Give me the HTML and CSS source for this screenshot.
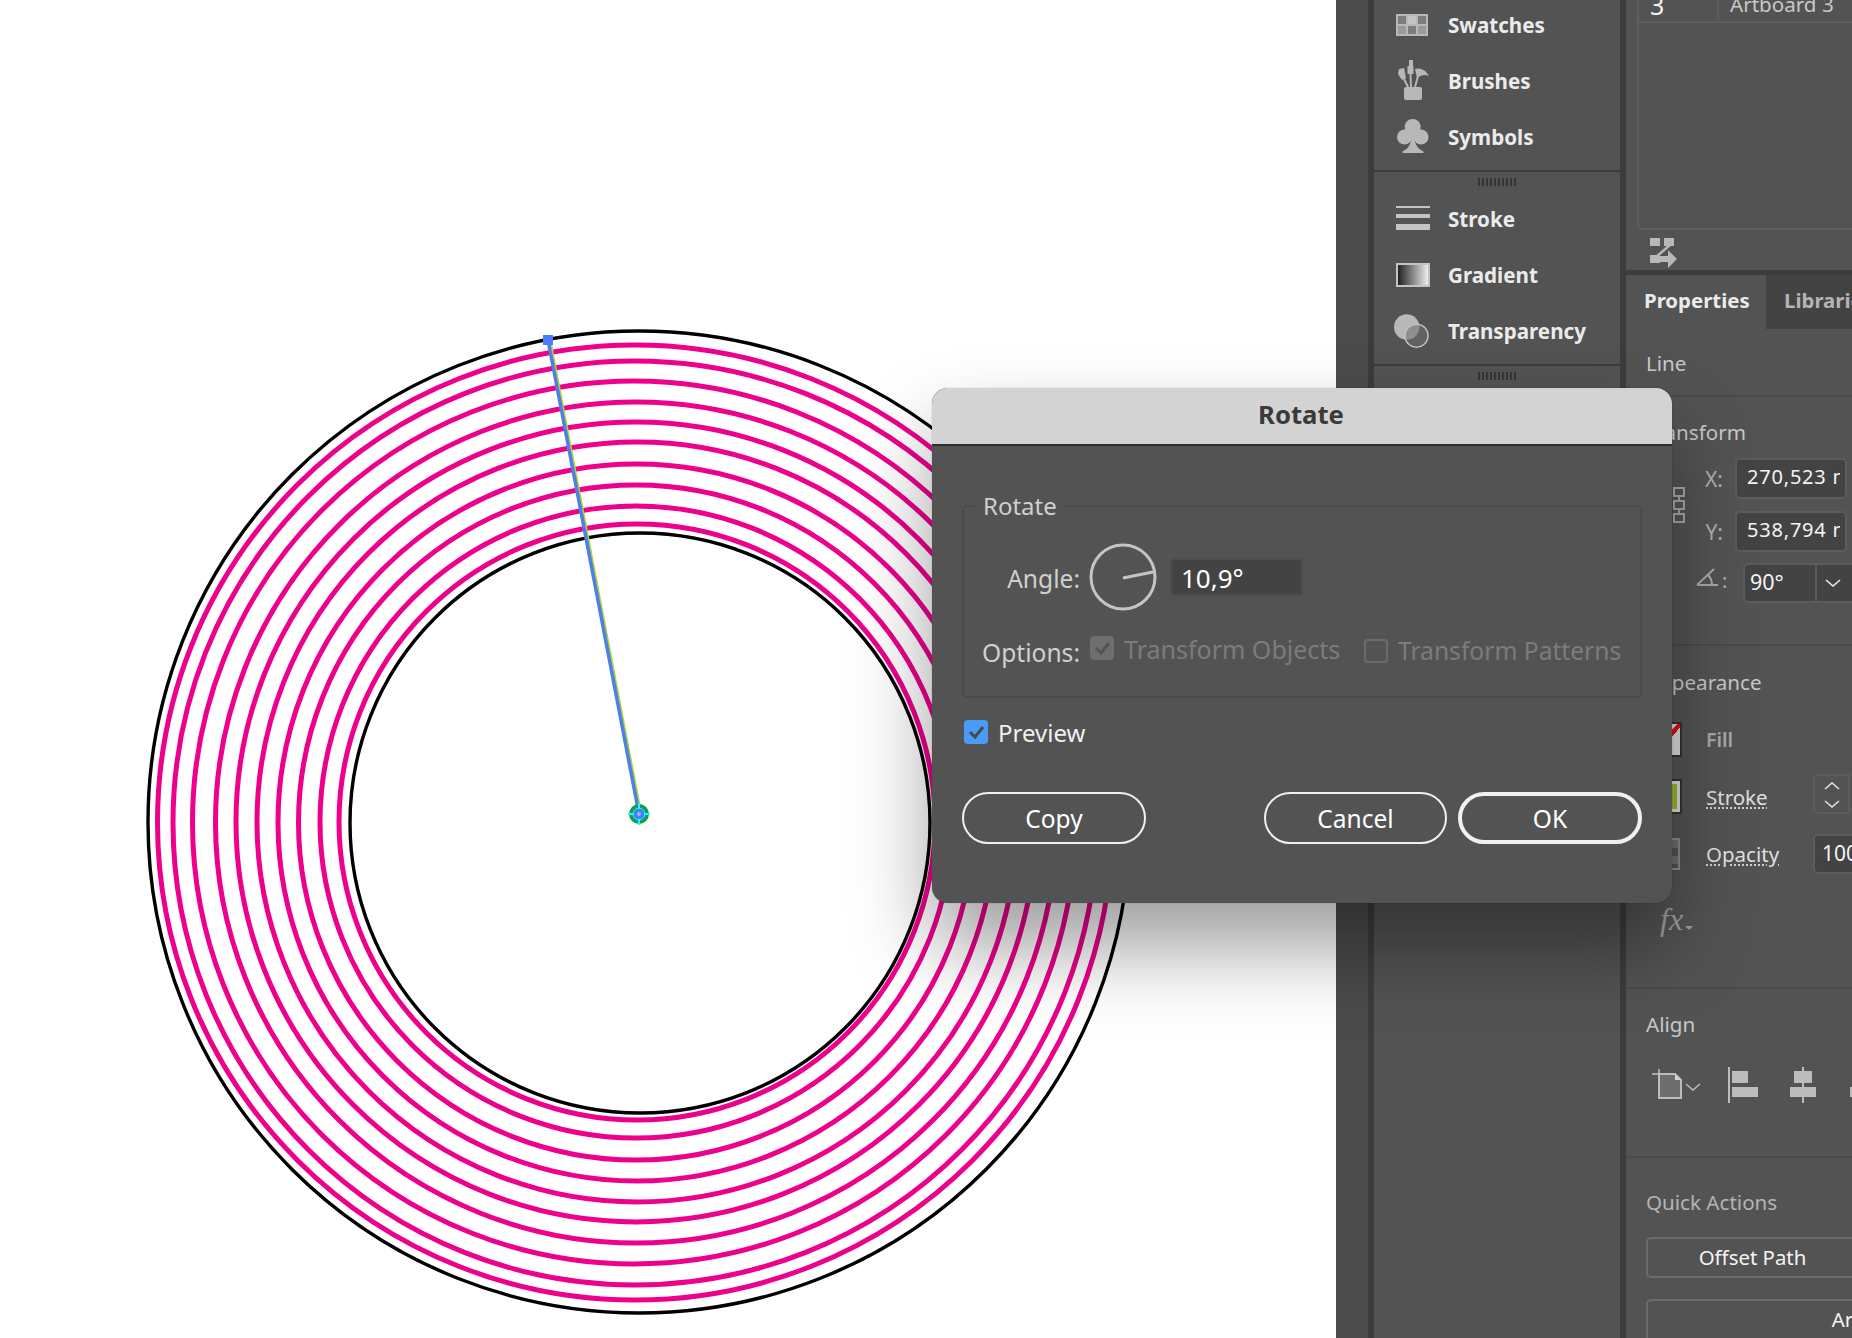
FILE: index.html
```html
<!DOCTYPE html>
<html lang="en">
<head>
    <meta charset="UTF-8">
    <title>Rotate</title>
    <link rel="stylesheet" href="styles.css">
</head>
<body>
    <!-- Artboard -->
    <main class="canvas">
        <svg class="artwork" width="1336" height="1338" viewBox="0 0 1336 1338">
            <g fill="none" stroke="#ec008c" stroke-width="5">
                <circle cx="635" cy="822.5" r="477.5"/>
                <circle cx="635" cy="823" r="462"/>
                <circle cx="634" cy="822.5" r="441.5"/>
                <circle cx="636" cy="822.5" r="420.5"/>
                <circle cx="636" cy="822" r="400"/>
                <circle cx="637" cy="822" r="380"/>
                <circle cx="636.5" cy="822.5" r="358.5"/>
                <circle cx="636" cy="822.5" r="337.5"/>
                <circle cx="636" cy="822" r="316"/>
                <circle cx="637" cy="822" r="298"/>
            </g>
            <g fill="none" stroke="#000" stroke-width="3.4">
                <circle cx="639" cy="822" r="491"/>
                <circle cx="640" cy="823" r="290"/>
            </g>
            <line x1="549.2" y1="340" x2="640.2" y2="814" stroke="#b5d334" stroke-width="4"/>
            <line x1="548" y1="340" x2="639" y2="814" stroke="#4a80ea" stroke-width="3.5"/>
            <rect x="543" y="335" width="10" height="10" fill="#4a7dff"/>
            <circle cx="639" cy="814" r="10" fill="#0aa14f"/>
            <circle cx="639" cy="814" r="6" fill="#4a7dff" stroke="#2ff0ff" stroke-width="1"/>
            <circle cx="639" cy="814" r="2" fill="#8fb8ff"/>
            <path d="M639 803v6M639 819v6M628 814h6M644 814h6" stroke="#2ff0ff" stroke-width="2" fill="none"/>
        </svg>
    </main>

    <div class="strip"></div>

    <!-- Collapsed panels -->
    <nav class="dock">
        <div class="dock-group dock-group-first">
            <div class="dock-item">
                <svg width="36" height="26" viewBox="0 0 36 26">
                    <rect x="0" y="2" width="32" height="22" fill="#b8b8b8"/>
                    <rect x="2" y="4" width="8" height="8" fill="#7d7d7d"/>
                    <rect x="12" y="4" width="8" height="8" fill="#c4c4c4"/>
                    <rect x="22" y="4" width="8" height="8" fill="#7d7d7d"/>
                    <rect x="2" y="14" width="8" height="8" fill="#999"/>
                    <rect x="12" y="14" width="8" height="8" fill="#7d7d7d"/>
                    <rect x="22" y="14" width="8" height="8" fill="#999"/>
                </svg>
                <span>Swatches</span>
            </div>
            <div class="dock-item">
                <svg width="36" height="42" viewBox="0 0 36 42">
                    <g fill="#b8b8b8">
                        <rect x="8" y="27" width="18" height="13" rx="2"/>
                        <rect x="13" y="0" width="4" height="6"/>
                        <rect x="11.5" y="6" width="6" height="8"/>
                        <path d="M3 9l5-1 2 10-4 2-4-6z"/>
                        <path d="M19 9c5-2 11 1 14 7-4-2-8-1-12 2z"/>
                    </g>
                    <path d="M14.5 14l.5 13M8 19l4 8M22 16l-3 11" stroke="#b8b8b8" stroke-width="2" fill="none"/>
                </svg>
                <span>Brushes</span>
            </div>
            <div class="dock-item">
                <svg width="36" height="36" viewBox="0 0 36 36">
                    <g fill="#b8b8b8">
                        <circle cx="16.7" cy="8" r="8"/>
                        <circle cx="8.5" cy="18" r="7.5"/>
                        <circle cx="25" cy="18" r="7.5"/>
                        <path d="M15.5 14h2.5c0 9 2 15 9.5 18.5v1.5H6.5v-1.5C14 29 15.5 23 15.5 14z"/>
                    </g>
                </svg>
                <span>Symbols</span>
            </div>
        </div>
        <div class="grip"></div>
        <div class="dock-group">
            <div class="dock-item">
                <svg width="36" height="26" viewBox="0 0 36 26">
                    <g fill="#c4c4c4">
                        <rect x="0" y="0" width="34" height="2"/>
                        <rect x="0" y="8" width="34" height="4"/>
                        <rect x="0" y="18" width="34" height="6"/>
                    </g>
                </svg>
                <span>Stroke</span>
            </div>
            <div class="dock-item">
                <div class="gradient-icon"></div>
                <span>Gradient</span>
            </div>
            <div class="dock-item">
                <svg class="transparency-icon" width="36" height="36" viewBox="0 0 36 36">
                    <circle cx="10.7" cy="14" r="12.7" fill="#b8b8b8"/>
                    <circle cx="20.5" cy="22.7" r="11.5" fill="#6e6e6e" fill-opacity=".55" stroke="#c4c4c4" stroke-width="1.5"/>
                </svg>
                <span>Transparency</span>
            </div>
        </div>
        <div class="grip"></div>
    </nav>

    <!-- Right hand panel -->
    <aside class="side">
        <div class="artboards">
            <div class="artboard-list">
                <div class="artboard-row">
                    <span class="artboard-num">3</span>
                    <span class="artboard-name">Artboard 3</span>
                </div>
            </div>
            <svg class="rearrange" width="28" height="30" viewBox="0 0 28 30">
                <g fill="#b8b8b8">
                    <rect x="0" y="0" width="10" height="8"/>
                    <rect x="14" y="0" width="10" height="8"/>
                    <rect x="0" y="17" width="10" height="8"/>
                    <path d="M10 18h8v-6l9 9-9 9v-6h-8z"/>
                </g>
                <path d="M20 7L6 19" stroke="#b8b8b8" stroke-width="2.5" fill="none"/>
            </svg>
        </div>

        <div class="tabs">
            <div class="tab tab-active">Properties</div>
            <div class="tab">Libraries</div>
        </div>

        <section class="section section-line">
            <div class="section-title">Line</div>
        </section>

        <section class="section section-transform">
            <div class="section-title">Transform</div>
            <div class="xy">
                <svg class="link-icon" width="12" height="36" viewBox="0 0 12 36">
                    <g fill="none" stroke="#a8a8a8" stroke-width="2">
                        <rect x="1" y="1" width="10" height="8"/>
                        <rect x="1" y="14" width="10" height="8"/>
                        <rect x="1" y="27" width="10" height="8"/>
                        <path d="M6 9v5M6 22v5"/>
                    </g>
                </svg>
                <div class="xy-rows">
                    <div class="field-row">
                        <label class="field-label">X:</label>
                        <div class="field"><span class="field-value">270,523 mm</span></div>
                    </div>
                    <div class="field-row">
                        <label class="field-label">Y:</label>
                        <div class="field"><span class="field-value">538,794 mm</span></div>
                    </div>
                </div>
            </div>
            <div class="angle-row">
                <svg width="23" height="20" viewBox="0 0 23 20">
                    <path d="M1 18L18 2M1 18h21M12 8c3 3 4 6 4 10" fill="none" stroke="#a8a8a8" stroke-width="2"/>
                </svg>
                <span class="angle-colon">:</span>
                <div class="combo">
                    <span class="combo-value">90°</span>
                    <span class="combo-arrow">
                        <svg width="16" height="10" viewBox="0 0 16 10"><path d="M1 2l7 6 7-6" fill="none" stroke="#eee" stroke-width="1.5"/></svg>
                    </span>
                </div>
            </div>
        </section>

        <section class="section section-appearance">
            <div class="section-title">Appearance</div>
            <div class="appearance-row">
                <div class="swatch swatch-fill"></div>
                <span class="appearance-label appearance-label-dim">Fill</span>
            </div>
            <div class="appearance-row">
                <div class="swatch swatch-stroke"></div>
                <span class="appearance-label"><u>Stroke</u></span>
                <div class="stepper">
                    <svg width="18" height="34" viewBox="0 0 18 34">
                        <path d="M2 12l7-6 7 6M2 24l7 6 7-6" fill="none" stroke="#e6e6e6" stroke-width="1.5"/>
                    </svg>
                </div>
            </div>
            <div class="appearance-row">
                <div class="swatch swatch-opacity"></div>
                <span class="appearance-label"><u>Opacity</u></span>
                <div class="opacity-field">100%</div>
            </div>
            <div class="fx">
                <span class="fx-text">fx</span>
                <span class="fx-arrow"></span>
            </div>
        </section>

        <section class="section section-align">
            <div class="section-title">Align</div>
            <div class="align-icons">
                <svg width="50" height="32" viewBox="0 0 50 32">
                    <path d="M1 7h6M8 2v5" stroke="#c4c4c4" stroke-width="1.5" fill="none"/>
                    <path d="M8 7h16l6 6v18H8z" fill="#6e6e6e" stroke="#bcbcbc" stroke-width="2"/>
                    <path d="M24 7l6 6h-6z" fill="#d4d4d4"/>
                    <path d="M35 17l7 6 7-6" fill="none" stroke="#bcbcbc" stroke-width="1.5"/>
                </svg>
                <svg class="align-left" width="30" height="36" viewBox="0 0 30 36">
                    <g fill="#bcbcbc">
                        <rect x="0" y="0" width="2" height="36"/>
                        <rect x="4" y="4" width="16" height="12"/>
                        <rect x="4" y="20" width="26" height="10"/>
                    </g>
                </svg>
                <svg class="align-center" width="26" height="36" viewBox="0 0 26 36">
                    <g fill="#bcbcbc">
                        <rect x="12" y="0" width="2" height="36"/>
                        <rect x="4" y="4" width="18" height="12"/>
                        <rect x="0" y="20" width="26" height="10"/>
                    </g>
                </svg>
                <svg class="align-right" width="26" height="36" viewBox="0 0 26 36">
                    <rect x="0" y="20" width="26" height="10" fill="#bcbcbc"/>
                </svg>
            </div>
        </section>

        <section class="section section-quick">
            <div class="section-title section-title-dim">Quick Actions</div>
            <div class="quick-row">
                <div class="quick-btn quick-btn-half">Offset Path</div>
            </div>
            <div class="quick-row quick-row-second">
                <div class="quick-btn quick-btn-full">Arrange</div>
            </div>
        </section>
    </aside>

    <!-- Rotate dialog -->
    <div class="dialog">
        <div class="dialog-title">Rotate</div>
        <div class="dialog-body">
            <fieldset class="group">
                <legend>Rotate</legend>
                <div class="angle-line">
                    <label class="group-label">Angle:</label>
                    <svg class="dial" width="68" height="68" viewBox="0 0 68 68">
                        <circle cx="34" cy="34" r="32" fill="none" stroke="#c4c4c4" stroke-width="3"/>
                        <path d="M34 35l30-6" fill="none" stroke="#c4c4c4" stroke-width="3"/>
                    </svg>
                    <div class="angle-input">10,9°</div>
                </div>
                <div class="options-line">
                    <label class="group-label">Options:</label>
                    <span class="check check-disabled">
                        <svg width="24" height="24" viewBox="0 0 24 24"><path d="M6 12l5 5 8-10" fill="none" stroke="#535353" stroke-width="3"/></svg>
                    </span>
                    <span class="option-text option-objects">Transform Objects</span>
                    <span class="check check-empty"></span>
                    <span class="option-text option-patterns">Transform Patterns</span>
                </div>
            </fieldset>
            <div class="preview">
                <span class="check check-on">
                    <svg width="24" height="24" viewBox="0 0 24 24"><path d="M6 12l5 5 8-10" fill="none" stroke="#4a4a4a" stroke-width="3"/></svg>
                </span>
                <span class="preview-text">Preview</span>
            </div>
            <div class="buttons">
                <button class="btn btn-copy">Copy</button>
                <button class="btn">Cancel</button>
                <button class="btn btn-ok">OK</button>
            </div>
        </div>
    </div>
</body>
</html>
```
FILE: styles.css
```css
html, body {
    margin: 0;
    padding: 0;
}
body {
    position: relative;
    display: flex;
    width: 1852px;
    height: 1338px;
    overflow: hidden;
    background-color: #535353;
    font-family: "Noto Sans", sans-serif;
    color: #e8e8e8;
}
.canvas {
    flex: none;
    width: 1336px;
    height: 1338px;
    background-color: #fff;
}
.artwork {
    display: block;
}
.strip {
    flex: none;
    width: 32px;
    background-color: #4b4b4b;
}

/* dock */
.dock {
    flex: none;
    width: 246px;
    border-left: 6px solid #3c3c3c;
    border-right: 6px solid #3c3c3c;
    background-color: #535353;
}
.dock-group {
    height: 175px;
    box-sizing: border-box;
    border-bottom: 2px solid #3c3c3c;
}
.dock-group-first {
    margin-top: -3px;
}
.dock-item {
    display: flex;
    align-items: center;
    height: 56px;
    padding-left: 22px;
    font-size: 20.6px;
    font-weight: 700;
    color: #ebebeb;
}
.dock-item svg, .gradient-icon {
    flex: none;
}
.dock-item span {
    position: absolute;
    margin-left: 52px;
}
.transparency-icon {
    overflow: visible;
}
.gradient-icon {
    width: 30px;
    height: 20px;
    border: 2px solid #c4c4c4;
    background: linear-gradient(to right, #222, #eee);
}
.grip {
    width: 38px;
    height: 8px;
    margin: 6px auto 5px;
    background: repeating-linear-gradient(to right, #353535 0, #353535 2px, transparent 2px, transparent 4px);
}

/* right panel */
.side {
    flex: none;
    width: 226px;
    overflow: hidden;
}
.artboards {
    height: 270px;
    padding-left: 11px;
    box-sizing: border-box;
}
.artboard-list {
    width: 260px;
    height: 230px;
    box-sizing: border-box;
    border-left: 2px solid #5e5e5e;
    border-bottom: 2px solid #5e5e5e;
    border-bottom-left-radius: 6px;
}
.artboard-row {
    display: flex;
    height: 21px;
    align-items: flex-end;
    overflow: hidden;
    border-bottom: 2px solid #5e5e5e;
    font-size: 20.6px;
    line-height: 28px;
}
.artboard-num {
    flex: none;
    width: 80px;
    padding-left: 11px;
    box-sizing: border-box;
    border-right: 2px solid #5e5e5e;
    font-size: 25px;
    color: #f2f2f2;
    margin-bottom: 2px;
}
.artboard-name {
    padding-left: 11px;
    white-space: nowrap;
    color: #c8c8c8;
    margin-bottom: 3px;
}
.rearrange {
    display: block;
    margin: 8px 0 0 13px;
}
.tabs {
    display: flex;
    height: 60px;
    border-top: 5px solid #3c3c3c;
    box-sizing: border-box;
    align-items: flex-start;
    background-color: #535353;
}
.tab {
    flex: none;
    height: 54px;
    line-height: 50px;
    padding: 0 18px;
    box-sizing: border-box;
    font-size: 20.4px;
    font-weight: 700;
    color: #b4b4b4;
    background-color: #434343;
}
.tab-active {
    width: 140px;
    color: #ebebeb;
    background-color: #535353;
}
.section {
    box-sizing: border-box;
    padding-left: 20px;
    border-bottom: 2px solid #4a4a4a;
}
.section-title {
    height: 28px;
    line-height: 26px;
    font-size: 20.6px;
    color: #c8c8c8;
}
.section-title-dim {
    color: #b4b4b4;
}
.section-line {
    height: 67px;
    padding-top: 20px;
}
.section-transform {
    height: 249px;
    padding-top: 22px;
}
.section-appearance {
    height: 343px;
    padding-top: 23px;
}
.section-align {
    height: 169px;
    padding-top: 22px;
}
.section-quick {
    border-bottom: none;
    padding-top: 31px;
}

/* transform */
.xy {
    display: flex;
    align-items: center;
    margin-top: 11px;
}
.link-icon {
    flex: none;
    margin-left: 27px;
}
.xy-rows {
    display: flex;
    flex-direction: column;
    gap: 12px;
}
.field-row {
    display: flex;
    align-items: center;
    gap: 12px;
}
.field-label {
    width: 38px;
    text-align: right;
    font-size: 21px;
    color: #b0b0b0;
}
.field {
    width: 112px;
    height: 41px;
    box-sizing: border-box;
    border: 2px solid #5c5c5c;
    border-radius: 5px;
    background-color: #434343;
    padding-left: 10px;
    line-height: 34px;
    font-size: 20px;
    letter-spacing: .8px;
    color: #f4f4f4;
}
.field-value {
    display: block;
    width: 93px;
    overflow: hidden;
    white-space: nowrap;
}
.angle-row {
    display: flex;
    align-items: center;
    margin-top: 11px;
    height: 40px;
}
.angle-row svg {
    flex: none;
    margin-left: 50px;
    margin-bottom: 12px;
}
.combo .combo-arrow svg {
    margin: 0;
}
.angle-colon {
    flex: none;
    width: 24px;
    padding-left: 3px;
    box-sizing: border-box;
    margin-bottom: 6px;
    font-size: 20px;
    color: #b0b0b0;
}
.combo {
    display: flex;
    flex: none;
    width: 140px;
    height: 40px;
    box-sizing: border-box;
    border: 2px solid #5c5c5c;
    border-radius: 5px;
    background-color: #434343;
}
.combo-value {
    width: 72px;
    padding-left: 5px;
    box-sizing: border-box;
    line-height: 34px;
    font-size: 21.5px;
    color: #f4f4f4;
    border-right: 2px solid #5c5c5c;
}
.combo-arrow {
    display: flex;
    align-items: center;
    padding-left: 8px;
}

/* appearance */
.section-appearance .section-title {
    margin-bottom: 14px;
}
.appearance-row {
    display: flex;
    align-items: center;
    height: 57px;
}
.swatch {
    flex: none;
    width: 32px;
    height: 35px;
    margin-left: 4px;
    box-sizing: border-box;
}
.swatch-fill {
    border: 2px solid #333;
    background: linear-gradient(to bottom right, #ddd 45%, #e01010 45%, #e01010 56%, #ddd 56%);
}
.swatch-stroke {
    border: 2px solid #333;
    outline: 3px solid #dcdcdc;
    outline-offset: -5px;
    background-color: #9ab82e;
}
.swatch-opacity {
    border: 2px solid #8c8c8c;
    width: 30px;
    height: 32px;
    margin-right: 2px;
    background: repeating-linear-gradient(to bottom, #6e6e6e 0, #6e6e6e 8px, #535353 8px, #535353 16px);
}
.appearance-label {
    flex: none;
    width: 107px;
    margin-left: 24px;
    font-size: 20.5px;
    color: #e0e0e0;
}
.appearance-label u {
    text-decoration: underline dotted #d0d0d0 2px;
    text-underline-offset: 3px;
}
.appearance-label-dim {
    font-size: 19.5px;
    color: #a8a8a8;
    font-weight: 600;
}
.stepper {
    flex: none;
    display: flex;
    align-items: center;
    justify-content: center;
    width: 37px;
    height: 40px;
    margin-bottom: 5px;
    box-sizing: border-box;
    border: 2px solid #5c5c5c;
    border-radius: 5px 0 0 5px;
}
.opacity-field {
    flex: none;
    width: 90px;
    height: 40px;
    box-sizing: border-box;
    border: 2px solid #5c5c5c;
    border-radius: 5px;
    background-color: #434343;
    padding-left: 7px;
    line-height: 34px;
    font-size: 21px;
    color: #f4f4f4;
}
.fx {
    display: flex;
    align-items: flex-end;
    margin: 16px 0 0 14px;
    height: 40px;
}
.fx-text {
    font-family: "Liberation Serif", serif;
    font-style: italic;
    font-size: 32px;
    line-height: 38px;
    color: #a0a0a0;
}
.fx-arrow {
    width: 0;
    height: 0;
    margin: 0 0 8px 2px;
    border-left: 4px solid transparent;
    border-right: 4px solid transparent;
    border-top: 4px solid #a0a0a0;
}

/* align */
.align-icons {
    display: flex;
    align-items: flex-start;
    margin: 28px 0 0 5px;
}
.align-icons svg {
    flex: none;
}
.align-icons .align-left {
    margin-left: 27px;
}
.align-icons .align-center {
    margin-left: 32px;
}
.align-icons .align-right {
    margin-left: 34px;
}

/* quick actions */
.quick-row {
    display: flex;
    margin-top: 20px;
}
.quick-row-second {
    margin-top: 21px;
}
.quick-btn {
    flex: none;
    height: 41px;
    box-sizing: border-box;
    border: 2px solid #6c6c6c;
    border-radius: 5px;
    line-height: 37px;
    text-align: center;
    font-size: 20.4px;
    color: #f4f4f4;
}
.quick-btn-half {
    width: 213px;
}
.quick-btn-full {
    width: 449px;
    height: 60px;
}

/* dialog */
.dialog {
    position: absolute;
    left: 932px;
    top: 388px;
    width: 740px;
    height: 515px;
    border-radius: 16px;
    background-color: #535353;
    box-shadow: 0 45px 80px rgba(0, 0, 0, 0.38), 0 0 1px rgba(0, 0, 0, 0.5);
    overflow: hidden;
}
.dialog-title {
    height: 56px;
    padding-right: 2px;
    line-height: 53px;
    text-align: center;
    background-color: #d3d3d3;
    border-bottom: 2px solid #2e2e2e;
    font-size: 25.7px;
    font-weight: 700;
    color: #3a3a3a;
}
.dialog-body {
    padding: 46px 30px 0;
}
.group {
    margin: 0;
    padding: 0;
    height: 206px;
    box-sizing: border-box;
    border: 2px solid #4b4b4b;
    border-radius: 5px;
}
.group legend {
    margin-left: 11px;
    padding: 0 8px;
    line-height: 28px;
    font-size: 24px;
    color: #d0d0d0;
}
.angle-line {
    display: flex;
    align-items: center;
    margin-top: 23px;
}
.group-label {
    flex: none;
    width: 116px;
    text-align: right;
    font-size: 24.6px;
    color: #d0d0d0;
}
.angle-line .group-label {
    padding-top: 2px;
}
.dial {
    flex: none;
    margin-left: 9px;
}
.angle-input {
    flex: none;
    width: 133px;
    height: 38px;
    margin-left: 13px;
    box-sizing: border-box;
    border: 2px solid #4d4d4d;
    border-radius: 4px;
    background-color: #434343;
    padding-left: 9px;
    line-height: 36px;
    font-size: 26px;
    color: #fff;
}
.options-line {
    display: flex;
    align-items: center;
    height: 38px;
    margin-top: 22px;
}
.check {
    flex: none;
    display: block;
    width: 24px;
    height: 24px;
    box-sizing: border-box;
    border-radius: 4px;
}
.check-disabled {
    margin: 0 0 8px 10px;
    background-color: #6e6e6e;
}
.check-empty {
    margin: 0 0 3px 25px;
    border: 2px solid #6c6c6c;
}
.check-on {
    background-color: #4a9bf5;
}
.option-text {
    flex: none;
    margin-left: 10px;
    white-space: nowrap;
    color: #7c7c7c;
}
.option-objects {
    width: 215px;
    margin-bottom: 6px;
    font-size: 25px;
}
.option-patterns {
    margin-bottom: 4px;
    font-size: 24.6px;
}
.preview {
    display: flex;
    align-items: center;
    height: 24px;
    margin: 22px 0 0 2px;
}
.preview-text {
    margin-left: 10px;
    font-size: 24px;
    color: #f0f0f0;
}
.buttons {
    display: flex;
    gap: 11px;
    margin-top: 48px;
}
.btn {
    width: 183px;
    height: 52px;
    padding: 0;
    border: 2px solid #f0f0f0;
    border-radius: 26px;
    background: none;
    font-family: "Noto Sans", sans-serif;
    font-size: 24.5px;
    color: #fff;
}
.btn-copy {
    width: 184px;
    margin-right: auto;
}
.btn-ok {
    width: 184px;
    border-width: 4px;
}
```
